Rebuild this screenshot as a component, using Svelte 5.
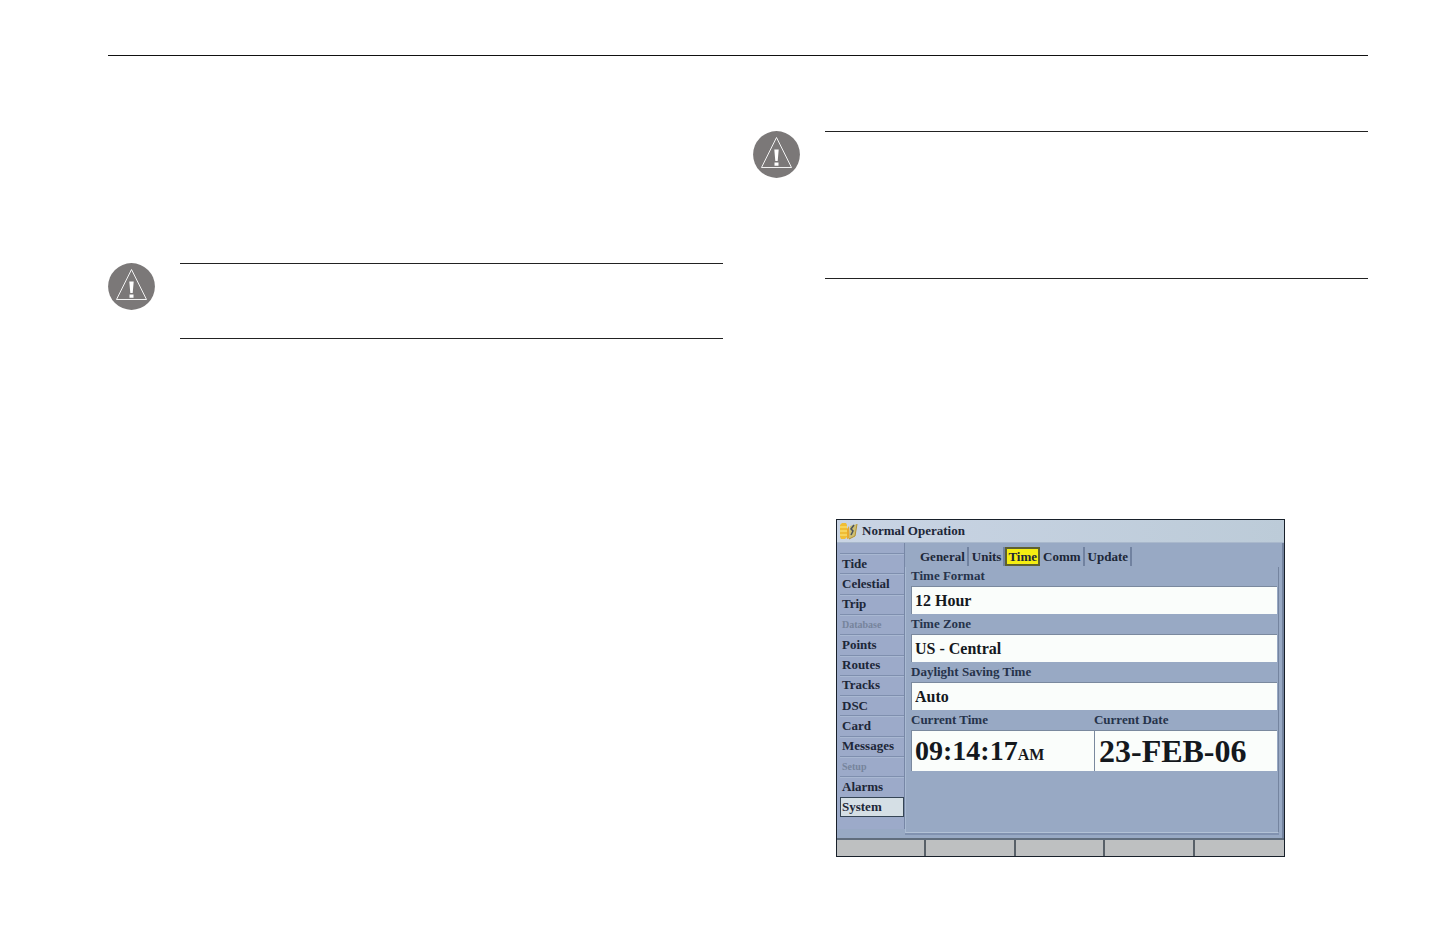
<script>
  const menu = ['Tide', 'Celestial', 'Trip', 'Database', 'Points', 'Routes', 'Tracks', 'DSC', 'Card', 'Messages', 'Setup', 'Alarms', 'System'];
  const disabled = ['Database', 'Setup'];
  const tabs = ['General', 'Units', 'Time', 'Comm', 'Update'];
  const fields = [
    { id: 'format', label: 'Time Format', value: '12 Hour' },
    { id: 'zone', label: 'Time Zone', value: 'US - Central' },
    { id: 'dst', label: 'Daylight Saving Time', value: 'Auto' }
  ];
  let page = $state('System');
  let tab = $state('Time');
</script>

{#snippet warning()}
  <svg class="warning" viewBox="0 0 47 47" aria-hidden="true">
    <circle cx="23.5" cy="23.5" r="23.4" fill="#7b7878" />
    <path d="M23.500 6.500 L38.500 36.500 H8.500 Z" fill="none" stroke="#fff" stroke-width="0.9" />
    <path d="M21.300 18.500 h4.400 l-1 11.500 h-2.400 Z M21.500 31.500 h4 v3.200 h-4 Z" fill="#fff" />
  </svg>
{/snippet}

<main class="sheet">
  <hr />
  <div class="columns">
    <section class="left">
      <div class="note">
        {@render warning()}
        <div class="rules short"></div>
      </div>
    </section>
    <section class="right">
      <div class="note">
        {@render warning()}
        <div class="rules tall"></div>
      </div>

      <div class="device">
        <header>
          <svg class="logo" viewBox="0 0 20 20" aria-hidden="true">
            <path d="M1 4 L3 2 H7 L8 4 V16 L6 18 H2 L1 16 Z" fill="#f0bd35" />
            <path d="M1 6 H8 M1 10 H8 M1 14 H8" stroke="#f8dc6a" stroke-width="1.500" />
            <path d="M8 8 L10 5 L11 17 L8 18 Z" fill="#e8a92d" />
            <path d="M11 5 L18 3 L16 15 L10 18 Z" fill="#cdbf74" />
            <path d="M18 3 L16 15 L10 18" fill="none" stroke="#b58f2d" />
            <path d="M15 4 L12 8 L14 10 L12 14" fill="none" stroke="#495260" stroke-width="1.500" />
          </svg>
          <span>Normal Operation</span>
        </header>
        <div class="body">
          <nav>
            {#each menu as item}
              <button class:active={page === item} disabled={disabled.includes(item)} onclick={() => (page = item)}>{item}</button>
            {/each}
          </nav>
          <div class="panel">
            <div class="tabs">
              {#each tabs as item}
                <button class:active={tab === item} onclick={() => (tab = item)}>{item}</button>
              {/each}
            </div>
            <div class="form">
              {#each fields as field}
                <div class="field">
                  <label for={field.id}>{field.label}</label>
                  <select id={field.id}><option>{field.value}</option></select>
                </div>
              {/each}
              <div class="clock">
                <div class="field">
                  <label for="time">Current Time</label>
                  <output id="time" class="time">09:14:17<small>AM</small></output>
                </div>
                <div class="field">
                  <label for="date">Current Date</label>
                  <output id="date" class="date">23-FEB-06</output>
                </div>
              </div>
            </div>
          </div>
        </div>
        <div class="keys">
          {#each [1, 2, 3, 4, 5] as key}
            <button aria-label="Softkey {key}"></button>
          {/each}
        </div>
      </div>
    </section>
  </div>
</main>

<style>
  :global(body) {
    margin: 0;
    background: #fff;
  }
  * {
    box-sizing: border-box;
  }
  button,
  select {
    margin: 0;
    padding: 0;
    border: 0;
    border-radius: 0;
    background: none;
    font: inherit;
    color: inherit;
    appearance: none;
  }
  .sheet {
    padding: 55px 72px 79px 108px;
    font: bold 13px/16px "Liberation Serif", serif;
    color: #1d2738;
  }
  hr {
    margin: 0;
    border: 0;
    border-top: 1px solid #111;
  }
  .columns {
    display: grid;
    grid-template-columns: 1fr 1fr;
    gap: 30px;
  }
  .left {
    padding-top: 207px;
  }
  .right {
    padding-top: 75px;
  }
  .note {
    display: flex;
    align-items: flex-start;
    gap: 25px;
  }
  .warning {
    flex: none;
    width: 47px;
    height: 47px;
  }
  .rules {
    flex: 1;
    border: solid #222;
    border-width: 1px 0;
  }
  .short {
    height: 76px;
  }
  .tall {
    height: 148px;
  }
  .device {
    width: 73%;
    margin: 240px 0 0 83px;
    border: 1px solid #18202a;
    background: #98a9c4;
  }
  header {
    display: flex;
    align-items: center;
    gap: 3px;
    height: 23px;
    padding-left: 2px;
    background: linear-gradient(90deg, #c9d4e4, #bccbd8);
    border-bottom: 1px solid #a9b8cc;
  }
  .logo {
    width: 20px;
    height: 20px;
  }
  .body {
    display: flex;
    padding-right: 3px;
    border-right: 2px solid #74849f;
  }
  nav {
    display: grid;
    grid-template-rows: repeat(13, 1fr);
    width: 68px;
    height: 286px;
    margin-bottom: 9px;
    padding: 10px 0 12px 3px;
    background: #9caac9;
    border-right: 1px solid #7787a6;
  }
  nav button {
    padding-left: 2px;
    text-align: left;
    border-top: 1px solid #7f8fae;
    box-shadow: inset 0 1px #a9b8d2;
  }
  nav button:disabled {
    font-size: 10px;
    color: #76849c;
  }
  nav button.active {
    padding-left: 1px;
    background: #d5dfe5;
    border: 1px solid #354555;
    box-shadow: none;
  }
  .panel {
    flex: 1;
    min-width: 0;
  }
  .tabs {
    display: flex;
    padding: 4px 0 0 12px;
  }
  .tabs button {
    height: 19px;
    padding: 0 2px 0 3px;
    border-right: 2px solid #7182a0;
  }
  .tabs button.active {
    background: #f5ee12;
    border: 2px solid #5e6030;
    padding: 0 1px;
  }
  .form {
    display: grid;
    gap: 2px;
    height: 266px;
    align-content: start;
    margin-top: 1px;
    padding: 1px 1px 0 5px;
    border-left: 1px solid #a9bad2;
    border-right: 1px solid #74849f;
    border-bottom: 1px solid #b3c2d6;
    box-shadow: 0 2px #8192b0;
  }
  .field {
    display: grid;
    gap: 2px;
    min-width: 0;
  }
  label {
    color: #26334b;
  }
  select,
  output {
    width: 100%;
    background: #fafdfb;
    border: 1px solid #7a899e;
    border-width: 1px 0 0 1px;
    color: #14181d;
  }
  select {
    height: 28px;
    padding-left: 3px;
    font-size: 16px;
    line-height: 24px;
  }
  .clock {
    display: grid;
    grid-template-columns: 1fr 1fr;
  }
  output {
    display: block;
    height: 41px;
    padding-left: 4px;
    line-height: 40px;
    white-space: nowrap;
  }
  .time {
    padding-left: 3px;
    font-size: 28px;
  }
  .date {
    font-size: 32px;
  }
  small {
    font-size: 16px;
  }
  .keys {
    display: grid;
    grid-template-columns: repeat(5, 1fr);
    border-top: 2px solid #606d7d;
  }
  .keys button {
    height: 16px;
    background: #bec0c1;
    border-right: 2px solid #586068;
  }
  .keys button:last-child {
    border-right: 0;
  }
</style>
